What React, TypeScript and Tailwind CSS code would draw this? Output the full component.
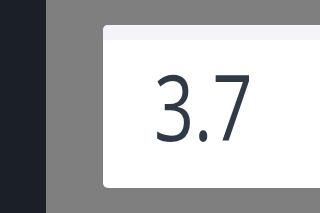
export default function App() {
  return (
    <div className="flex h-[213px] w-[320px] overflow-hidden">
      {/* sidebar */}
      <div className="w-[46px] shrink-0 bg-[#1a1f28]" />

      {/* dimmed content with modal card */}
      <div className="flex-1 bg-[#7f7f7f] pl-[57px] pt-[25px] overflow-hidden">
        <div className="w-[260px] h-[163px] bg-white rounded-[5px] overflow-hidden flex flex-col">
          <div className="h-[15px] bg-[#f3f5fb] shrink-0" />
          <div className="pl-[51px] pt-[21px]">
            <span
              className="inline-block origin-left scale-x-[0.77] text-[91px] leading-none text-[#2f3a46]"
              style={{ fontFamily: '"Open Sans", sans-serif' }}
            >
              3.7
            </span>
          </div>
        </div>
      </div>
    </div>
  )
}
